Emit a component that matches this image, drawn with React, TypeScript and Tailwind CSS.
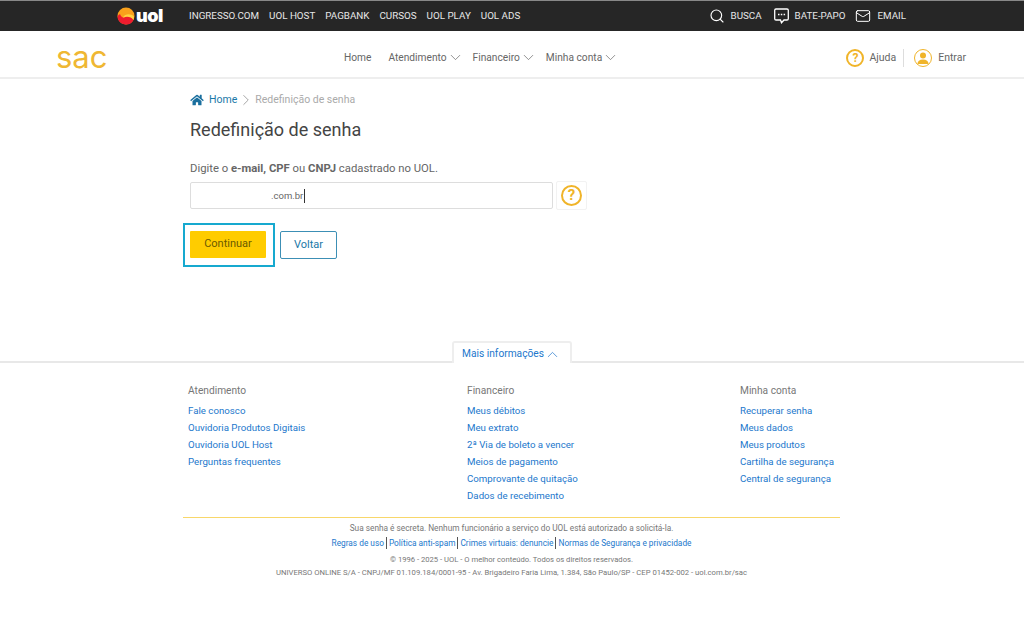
import { ChevronDown, ChevronUp, ChevronRight, Search, Mail } from "lucide-react";

const topLinks = ["INGRESSO.COM", "UOL HOST", "PAGBANK", "CURSOS", "UOL PLAY", "UOL ADS"];

const footerCols = [
  {
    title: "Atendimento",
    className: "w-[279px]",
    links: ["Fale conosco", "Ouvidoria Produtos Digitais", "Ouvidoria UOL Host", "Perguntas frequentes"],
  },
  {
    title: "Financeiro",
    className: "w-[273px]",
    links: [
      "Meus débitos",
      "Meu extrato",
      "2ª Via de boleto a vencer",
      "Meios de pagamento",
      "Comprovante de quitação",
      "Dados de recebimento",
    ],
  },
  {
    title: "Minha conta",
    className: "w-[110px]",
    links: ["Recuperar senha", "Meus dados", "Meus produtos", "Cartilha de segurança", "Central de segurança"],
  },
];

const legalLinks = ["Regras de uso", "Política anti-spam", "Crimes virtuais: denuncie", "Normas de Segurança e privacidade"];

const UolLogo = () => (
  <svg width="18" height="18" viewBox="0 0 18 18">
    <circle cx="9" cy="9" r="8.500" fill="#f9a11b" />
    <path d="M0.500 9a8.500 8.500 0 0 0 16 4C14 9 10 8 8 10 6 11.500 4 10 3 7z" fill="#ee1c2e" />
    <path d="M6 10.500c2-4 8-4 11-1l-0.500 3.500c-2-3-6-4-10.500-2.500z" fill="#ffd23f" />
  </svg>
);

const ChatIcon = () => (
  <svg width="15" height="16" viewBox="0 0 15 16" fill="none" stroke="white" strokeWidth="1.300" className="ml-[12px]">
    <path d="M2 1h11a1.300 1.300 0 0 1 1.300 1.300v8.400A1.300 1.300 0 0 1 13 12h-3l-2.500 2.800L6.500 12H2A1.300 1.300 0 0 1 0.700 10.700V2.300A1.300 1.300 0 0 1 2 1z" />
    <path d="M4 6.500h1.500M6.800 6.500h1.500M9.600 6.500h1.500" strokeWidth="1.600" />
  </svg>
);

const HelpCircle = ({ size }: { size: string }) => (
  <span className={`flex items-center justify-center rounded-full border-2 border-[#f0b429] font-bold text-[#f0b429] ${size}`}>?</span>
);

export default function App() {
  return (
    <div className="min-h-[621px] bg-white font-['Roboto',sans-serif] text-[#666]">
      <div className="flex h-[31px] items-center border-t border-[#888] border-b-[#444] bg-[#262626] text-[9.800px] text-[#e6e6e6]">
        <div className="ml-[117px] flex w-[72px] items-center gap-[1px]">
          <UolLogo />
          <span className="font-['Inter',sans-serif] text-[18px] leading-none font-black tracking-[-0.5px] text-white">uol</span>
        </div>
        <nav className="flex gap-[10px]">
          {topLinks.map((link) => (
            <span key={link}>{link}</span>
          ))}
        </nav>
        <div className="ml-auto mr-[118px] flex items-center">
          <Search size={16} strokeWidth={1.700} className="text-white" />
          <span className="ml-[6px]">BUSCA</span>
          <ChatIcon />
          <span className="ml-[6px]">BATE-PAPO</span>
          <Mail size={16} strokeWidth={1.500} className="ml-[10px] text-white" />
          <span className="ml-[6px]">EMAIL</span>
        </div>
      </div>

      <header className="flex h-[48px] items-center border-b-2 border-[#eee] pt-[7px] text-[10.200px]">
        <div className="-mt-[3px] ml-[56px] w-[288px] font-['Inter',sans-serif] text-[31px] leading-none text-[#efb733]">sac</div>
        <nav className="flex items-center">
          <span>Home</span>
          <span className="ml-[17px]">Atendimento</span>
          <ChevronDown size={17} strokeWidth={1} />
          <span className="ml-[9px]">Financeiro</span>
          <ChevronDown size={17} strokeWidth={1} />
          <span className="ml-[9px]">Minha conta</span>
          <ChevronDown size={17} strokeWidth={1} />
        </nav>
        <div className="ml-auto mr-[58px] flex items-center text-[10.500px]">
          <HelpCircle size="h-[18px] w-[18px] text-[12px]" />
          <span className="ml-[5px]">Ajuda</span>
          <span className="ml-[7px] h-[18px] w-px bg-[#ddd]" />
          <span className="ml-[10px] flex h-[18px] w-[18px] items-center justify-center rounded-full border border-[#f0b429]">
            <svg width="12" height="12" viewBox="0 0 12 12" fill="#f0b429">
              <circle cx="6" cy="3.500" r="3" />
              <path d="M0.500 12c0-3 2-4.500 5.500-4.500s5.500 1.500 5.500 4.500z" />
            </svg>
          </span>
          <span className="ml-[6px]">Entrar</span>
        </div>
      </header>

      <main className="h-[262px] pl-[190px]">
        <div className="flex items-center pt-[12px] text-[10.500px]">
          <svg width="14" height="12" viewBox="0 0 576 512" fill="#1a6f9e">
            <path d="M280 148 96 300v164a16 16 0 0 0 16 16l112-1a16 16 0 0 0 16-16v-96a16 16 0 0 1 16-16h64a16 16 0 0 1 16 16v96a16 16 0 0 0 16 16l112 1a16 16 0 0 0 16-16V300L296 148a12 12 0 0 0-16 0zM572 251l-84-69V44a12 12 0 0 0-12-12h-56a12 12 0 0 0-12 12v72l-89-74a48 48 0 0 0-61 0L4 251a12 12 0 0 0-2 17l26 31a12 12 0 0 0 17 2L280 107a12 12 0 0 1 16 0l235 194a12 12 0 0 0 17-2l26-31a12 12 0 0 0-2-17z" />
          </svg>
          <span className="ml-[5px] text-[#1a78a8]">Home</span>
          <ChevronRight size={18} strokeWidth={1} className="text-[#888]" />
          <span className="text-[#aaa]">Redefinição de senha</span>
        </div>
        <h1 className="mt-[9px] text-[18px] leading-[24px] text-[#444]">Redefinição de senha</h1>
        <p className="mt-[19px] text-[11.300px] leading-[16px]">
          Digite o <b>e-mail, CPF</b> ou <b>CNPJ</b> cadastrado no UOL.
        </p>
        <div className="mt-[4px] flex items-center">
          <div className="flex h-[27px] w-[363px] items-center rounded-[2px] border border-[#ddd] pl-[80px] pt-[1px] text-[9.500px]">
            .com.br<span className="ml-px h-[14px] w-px bg-[#333]" />
          </div>
          <div className="ml-[3px] flex h-[29px] w-[31px] items-center justify-center rounded-[2px] border border-[#f2f2f2]">
            <HelpCircle size="h-[21px] w-[21px] text-[15px]" />
          </div>
        </div>
        <div className="mt-[13px] flex items-center">
          <div className="-ml-[7px] border-2 border-[#16a9cf] pb-[7px] pl-[5px] pr-[7px] pt-[6px]">
            <button className="block h-[27px] w-[76px] rounded-[1px] bg-[#ffcc00] text-[11px] text-[#6b5a00]">Continuar</button>
          </div>
          <button className="ml-[5px] h-[28px] w-[57px] rounded-[2px] border border-[#3c8fb5] text-[11px] text-[#1a78a8]">Voltar</button>
        </div>
      </main>

      <footer className="text-[9.700px] text-[#2277cc]">
        <div className="flex h-[22px] justify-center border-b-2 border-[#e8e8e8] pr-[1px]">
          <div className="z-10 flex h-[22px] w-[120px] items-center justify-center rounded-t-[3px] border-2 border-b-0 border-[#eee] bg-white pt-[2px] text-[10.200px]">
            Mais informações
            <ChevronUp size={17} strokeWidth={1} />
          </div>
        </div>
        <div className="ml-[188px] mt-[20px] flex h-[134px]">
          {footerCols.map((col) => (
            <div key={col.title} className={col.className}>
              <h3 className="text-[10.200px] leading-[16px] text-[#777]">{col.title}</h3>
              <ul className="mt-[3px]">
                {col.links.map((link) => (
                  <li key={link} className="h-[17px] leading-[17px] whitespace-nowrap">
                    {link}
                  </li>
                ))}
              </ul>
            </div>
          ))}
        </div>
        <div className="ml-[183px] w-[657px] border-t border-[#f8d76a] pt-[4px] text-center text-[8.300px] text-[#777]">
          <p className="leading-[12px]">Sua senha é secreta. Nenhum funcionário a serviço do UOL está autorizado a solicitá-la.</p>
          <p className="mt-[3px] flex justify-center leading-[12px] text-[#2277cc]">
            {legalLinks.map((link, i) => (
              <span key={link} className={i > 0 ? "ml-[2px] border-l border-[#555] pl-[2px]" : ""}>
                {link}
              </span>
            ))}
          </p>
          <p className="mt-[5px] text-[7.650px] leading-[11px]">© 1996 - 2025 - UOL - O melhor conteúdo. Todos os direitos reservados.</p>
          <p className="mt-[2px] whitespace-nowrap text-[7.700px] leading-[11px]">
            UNIVERSO ONLINE S/A - CNPJ/MF 01.109.184/0001-95 - Av. Brigadeiro Faria Lima, 1.384, São Paulo/SP - CEP 01452-002 - uol.com.br/sac
          </p>
        </div>
      </footer>
    </div>
  );
}
